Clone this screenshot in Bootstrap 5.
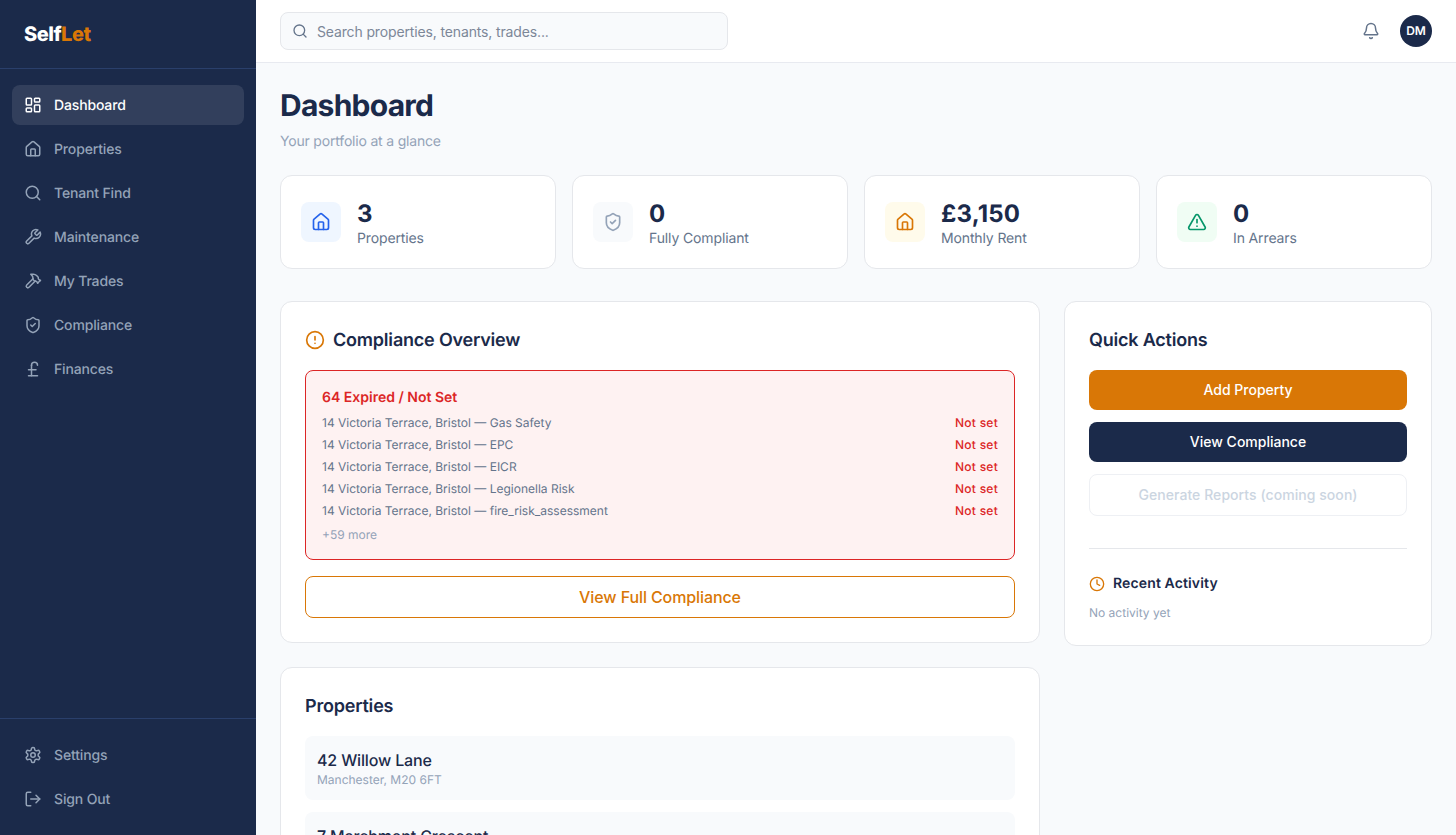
<!DOCTYPE html>
<html lang="en">
<head>
    <meta charset="UTF-8">
    <meta name="viewport" content="width=device-width, initial-scale=1.0">
    <title>SelfLet Dashboard</title>
    <link rel="stylesheet" href="https://cdn.jsdelivr.net/npm/bootstrap@5.3.0/dist/css/bootstrap.min.css">
    <style>
        html, body { height: 100%; overflow: hidden; }
        body { font-family: Inter, "Liberation Sans", sans-serif; background: #f8fafc; color: #1b2a4a; text-rendering: geometricPrecision; }
        svg.ic { fill: none; stroke: currentColor; stroke-width: 2; stroke-linecap: round; stroke-linejoin: round; flex-shrink: 0; }

        .app { height: 835px; }
        .sidebar { width: 256px; background: #1b2a4a; flex-shrink: 0; }
        .brand { height: 69px; padding: 0 24px; border-bottom: 1px solid #2a3f6b; font-size: 20px; font-weight: 800; letter-spacing: -0.5px; color: #fff; }
        .brand span { color: #d97706; }
        .side-nav { padding: 16px 12px; gap: 4px; }
        .side-foot { padding: 16px 12px; gap: 4px; border-top: 1px solid #2a3f6b; }
        .side-link { height: 40px; padding: 0 12px; gap: 12px; border-radius: 8px; font-size: 14px; font-weight: 500; letter-spacing: -0.15px; color: #94a3b8; text-decoration: none; }
        .side-link.active { background: rgba(255,255,255,0.1); color: #fff; }

        .topbar { height: 63px; padding: 0 24px; background: #fff; border-bottom: 1px solid #e8eaf0; }
        .search { width: 448px; height: 38px; padding: 0 12px 0 11px; gap: 9px; background: #f8fafc; border: 1px solid #e5e7eb; border-radius: 8px; color: #64748b; }
        .search input { border: 0; outline: 0; background: transparent; width: 100%; font-size: 14px; letter-spacing: -0.14px; padding: 0; color: #1b2a4a; }
        .search input::placeholder { color: #7c8798; opacity: 1; }
        .bell { color: #64748b; }
        .avatar { width: 32px; height: 32px; background: #1b2a4a; color: #fff; font-size: 12px; font-weight: 600; }

        .content { padding: 24px; }
        .page-title { font-size: 30px; font-weight: 700; line-height: 36px; letter-spacing: -0.75px; margin: 0 0 3px; padding-top: 1px; }
        .page-sub { font-size: 14px; line-height: 20px; letter-spacing: -0.19px; color: #94a3b8; margin: 8px 0 23px; }

        .panel { background: #fff; border: 1px solid #e5e7eb; border-radius: 12px; }
        .stats { display: grid; grid-template-columns: repeat(4, 1fr); gap: 16px; margin-bottom: 32px; }
        .stat { padding: 20px; height: 94px; gap: 16px; }
        .stat-icon { width: 40px; height: 40px; border-radius: 8px; }
        .stat-text { padding-top: 3px; }
        .stat-value { font-size: 24px; font-weight: 700; line-height: 32px; letter-spacing: 0.2px; margin-bottom: -1px; }
        .stat-label { font-size: 14px; line-height: 20px; letter-spacing: -0.13px; color: #64748b; }

        .columns { display: grid; grid-template-columns: 1fr 368px; gap: 24px; align-items: start; }
        .card-pad { padding: 24px; }
        .section-title { font-size: 18px; font-weight: 600; line-height: 28px; letter-spacing: -0.2px; margin: 0 0 -1px; padding-top: 1px; }

        .alert-box { background: #fef2f2; border: 1px solid #dc2626; border-radius: 8px; padding: 16px; margin-top: 16px; height: 190px; }
        .alert-head { font-size: 14px; font-weight: 600; line-height: 20px; color: #dc2626; margin-bottom: 4px; padding-top: 1px; }
        .alert-row { font-size: 12px; line-height: 16px; padding: 3px 0; color: #64748b; }
        .alert-row b { font-weight: 500; letter-spacing: 0.25px; color: #dc2626; }
        .alert-more { font-size: 12px; line-height: 16px; color: #94a3b8; margin-top: 5px; }

        .btn-full-outline { height: 42px; margin-top: 16px; border: 1px solid #d97706; border-radius: 8px; background: #fff; color: #d97706; font-size: 16px; font-weight: 500; letter-spacing: -0.1px; }
        .act { height: 40px; border-radius: 8px; font-size: 14px; font-weight: 500; border: 0; color: #fff; padding-top: 5px; padding-bottom: 7px; }
        .act-amber, .act-amber:hover { background: #d97706; color: #fff; }
        .act-navy, .act-navy:hover { background: #1b2a4a; color: #fff; }
        .btn.act-off:disabled { height: 42px; background: #fff; border: 1px solid #eef0f4; color: #cbd5e1; font-weight: 500; letter-spacing: 0.06px; opacity: 1; }

        .divider { height: 1px; background: #e5e7eb; margin: 32px 0 25px; }
        .recent-title { font-size: 14px; font-weight: 600; line-height: 20px; letter-spacing: 0.13px; }
        .recent-empty { font-size: 12px; line-height: 16px; color: #94a3b8; margin-top: 11px; }

        .prop-list { margin-top: 16px; }
        .prop-item { height: 64px; padding: 12px; background: #f8fafc; border-radius: 8px; }
        .prop-name { font-size: 16px; font-weight: 500; line-height: 24px; letter-spacing: -0.15px; }
        .prop-addr { font-size: 12px; line-height: 16px; color: #94a3b8; }
    </style>
</head>
<body>
    <div class="app d-flex">
        <aside class="sidebar d-flex flex-column">
            <div class="brand d-flex align-items-center">Self<span>Let</span></div>
            <nav class="side-nav d-flex flex-column flex-grow-1">
                <a href="#" class="side-link active d-flex align-items-center">
                    <svg class="ic" width="18" height="18" viewBox="0 0 24 24"><rect x="3" y="3" width="7" height="9" rx="1"/><rect x="14" y="3" width="7" height="5" rx="1"/><rect x="14" y="12" width="7" height="9" rx="1"/><rect x="3" y="16" width="7" height="5" rx="1"/></svg>
                    Dashboard
                </a>
                <a href="#" class="side-link d-flex align-items-center">
                    <svg class="ic" width="18" height="18" viewBox="0 0 24 24"><path d="M15 21v-8a1 1 0 0 0-1-1h-4a1 1 0 0 0-1 1v8"/><path d="M3 10a2 2 0 0 1 .709-1.528l7-5.999a2 2 0 0 1 2.582 0l7 5.999A2 2 0 0 1 21 10v9a2 2 0 0 1-2 2H5a2 2 0 0 1-2-2z"/></svg>
                    Properties
                </a>
                <a href="#" class="side-link d-flex align-items-center">
                    <svg class="ic" width="18" height="18" viewBox="0 0 24 24"><circle cx="11" cy="11" r="8"/><path d="m21 21-4.3-4.3"/></svg>
                    Tenant Find
                </a>
                <a href="#" class="side-link d-flex align-items-center">
                    <svg class="ic" width="18" height="18" viewBox="0 0 24 24"><path d="M14.7 6.3a1 1 0 0 0 0 1.4l1.6 1.6a1 1 0 0 0 1.4 0l3.77-3.77a6 6 0 0 1-7.94 7.94l-6.91 6.91a2.12 2.12 0 0 1-3-3l6.91-6.91a6 6 0 0 1 7.94-7.94l-3.76 3.76z"/></svg>
                    Maintenance
                </a>
                <a href="#" class="side-link d-flex align-items-center">
                    <svg class="ic" width="18" height="18" viewBox="0 0 24 24"><path d="m15 12-8.373 8.373a1 1 0 1 1-3-3L12 9"/><path d="m18 15 4-4"/><path d="m21.5 11.5-1.914-1.914A2 2 0 0 1 19 8.172V7l-2.26-2.26a6 6 0 0 0-4.202-1.756L9 2.96l.92.82A6.18 6.18 0 0 1 12 8.4V10l2 2h1.172a2 2 0 0 1 1.414.586L18.5 14.5"/></svg>
                    My Trades
                </a>
                <a href="#" class="side-link d-flex align-items-center">
                    <svg class="ic" width="18" height="18" viewBox="0 0 24 24"><path d="M20 13c0 5-3.5 7.5-7.66 8.95a1 1 0 0 1-.67-.01C7.5 20.5 4 18 4 13V6a1 1 0 0 1 1-1c2 0 4.5-1.2 6.24-2.72a1.17 1.17 0 0 1 1.52 0C14.51 3.81 17 5 19 5a1 1 0 0 1 1 1z"/><path d="m9 12 2 2 4-4"/></svg>
                    Compliance
                </a>
                <a href="#" class="side-link d-flex align-items-center">
                    <svg class="ic" width="18" height="18" viewBox="0 0 24 24"><path d="M18 7c0-5.333-8-5.333-8 0"/><path d="M10 7v14"/><path d="M6 21h12"/><path d="M6 13h10"/></svg>
                    Finances
                </a>
            </nav>
            <div class="side-foot d-flex flex-column">
                <a href="#" class="side-link d-flex align-items-center">
                    <svg class="ic" width="18" height="18" viewBox="0 0 24 24"><path d="M12.22 2h-.44a2 2 0 0 0-2 2v.18a2 2 0 0 1-1 1.73l-.43.25a2 2 0 0 1-2 0l-.15-.08a2 2 0 0 0-2.73.73l-.22.38a2 2 0 0 0 .73 2.73l.15.1a2 2 0 0 1 1 1.72v.51a2 2 0 0 1-1 1.74l-.15.09a2 2 0 0 0-.73 2.73l.22.38a2 2 0 0 0 2.73.73l.15-.08a2 2 0 0 1 2 0l.43.25a2 2 0 0 1 1 1.73V20a2 2 0 0 0 2 2h.44a2 2 0 0 0 2-2v-.18a2 2 0 0 1 1-1.73l.43-.25a2 2 0 0 1 2 0l.15.08a2 2 0 0 0 2.73-.73l.22-.39a2 2 0 0 0-.73-2.73l-.15-.08a2 2 0 0 1-1-1.74v-.5a2 2 0 0 1 1-1.74l.15-.09a2 2 0 0 0 .73-2.73l-.22-.38a2 2 0 0 0-2.73-.73l-.15.08a2 2 0 0 1-2 0l-.43-.25a2 2 0 0 1-1-1.73V4a2 2 0 0 0-2-2z"/><circle cx="12" cy="12" r="3"/></svg>
                    Settings
                </a>
                <a href="#" class="side-link d-flex align-items-center">
                    <svg class="ic" width="18" height="18" viewBox="0 0 24 24"><path d="M9 21H5a2 2 0 0 1-2-2V5a2 2 0 0 1 2-2h4"/><path d="m16 17 5-5-5-5"/><path d="M21 12H9"/></svg>
                    Sign Out
                </a>
            </div>
        </aside>

        <div class="flex-grow-1 d-flex flex-column overflow-hidden">
            <header class="topbar d-flex align-items-center justify-content-between flex-shrink-0">
                <label class="search d-flex align-items-center mb-0">
                    <svg class="ic" width="16" height="16" viewBox="0 0 24 24"><circle cx="11" cy="11" r="8"/><path d="m21 21-4.3-4.3"/></svg>
                    <input type="text" placeholder="Search properties, tenants, trades...">
                </label>
                <div class="d-flex align-items-center gap-3">
                    <svg class="ic bell me-1" width="18" height="18" viewBox="0 0 24 24"><path d="M10.268 21a2 2 0 0 0 3.464 0"/><path d="M3.262 15.326A1 1 0 0 0 4 17h16a1 1 0 0 0 .74-1.673C19.41 13.956 18 12.499 18 8A6 6 0 0 0 6 8c0 4.499-1.411 5.956-2.738 7.326"/></svg>
                    <div class="avatar rounded-circle d-flex align-items-center justify-content-center">DM</div>
                </div>
            </header>

            <main class="content flex-grow-1 overflow-hidden">
                <h1 class="page-title">Dashboard</h1>
                <p class="page-sub">Your portfolio at a glance</p>

                <div class="stats">
                    <div class="panel stat d-flex align-items-center">
                        <div class="stat-icon d-flex align-items-center justify-content-center" style="background:#eff6ff;color:#2563eb">
                            <svg class="ic" width="20" height="20" viewBox="0 0 24 24"><path d="M15 21v-8a1 1 0 0 0-1-1h-4a1 1 0 0 0-1 1v8"/><path d="M3 10a2 2 0 0 1 .709-1.528l7-5.999a2 2 0 0 1 2.582 0l7 5.999A2 2 0 0 1 21 10v9a2 2 0 0 1-2 2H5a2 2 0 0 1-2-2z"/></svg>
                        </div>
                        <div class="stat-text"><div class="stat-value">3</div><div class="stat-label">Properties</div></div>
                    </div>
                    <div class="panel stat d-flex align-items-center">
                        <div class="stat-icon d-flex align-items-center justify-content-center" style="background:#f8fafc;color:#94a3b8">
                            <svg class="ic" width="20" height="20" viewBox="0 0 24 24"><path d="M20 13c0 5-3.5 7.5-7.66 8.95a1 1 0 0 1-.67-.01C7.5 20.5 4 18 4 13V6a1 1 0 0 1 1-1c2 0 4.5-1.2 6.24-2.72a1.17 1.17 0 0 1 1.52 0C14.51 3.81 17 5 19 5a1 1 0 0 1 1 1z"/><path d="m9 12 2 2 4-4"/></svg>
                        </div>
                        <div class="stat-text"><div class="stat-value">0</div><div class="stat-label">Fully Compliant</div></div>
                    </div>
                    <div class="panel stat d-flex align-items-center">
                        <div class="stat-icon d-flex align-items-center justify-content-center" style="background:#fffbeb;color:#d97706">
                            <svg class="ic" width="20" height="20" viewBox="0 0 24 24"><path d="M15 21v-8a1 1 0 0 0-1-1h-4a1 1 0 0 0-1 1v8"/><path d="M3 10a2 2 0 0 1 .709-1.528l7-5.999a2 2 0 0 1 2.582 0l7 5.999A2 2 0 0 1 21 10v9a2 2 0 0 1-2 2H5a2 2 0 0 1-2-2z"/></svg>
                        </div>
                        <div class="stat-text"><div class="stat-value">£3,150</div><div class="stat-label">Monthly Rent</div></div>
                    </div>
                    <div class="panel stat d-flex align-items-center">
                        <div class="stat-icon d-flex align-items-center justify-content-center" style="background:#f0fdf4;color:#059669">
                            <svg class="ic" width="20" height="20" viewBox="0 0 24 24"><path d="m21.73 18-8-14a2 2 0 0 0-3.48 0l-8 14A2 2 0 0 0 4 21h16a2 2 0 0 0 1.73-3"/><path d="M12 9v4"/><path d="M12 17h.01"/></svg>
                        </div>
                        <div class="stat-text"><div class="stat-value">0</div><div class="stat-label">In Arrears</div></div>
                    </div>
                </div>

                <div class="columns">
                    <div class="d-flex flex-column gap-4">
                        <section class="panel card-pad">
                            <div class="d-flex align-items-center gap-2">
                                <svg class="ic" width="20" height="20" viewBox="0 0 24 24" style="color:#d97706"><circle cx="12" cy="12" r="10"/><path d="M12 8v4"/><path d="M12 16h.01"/></svg>
                                <h2 class="section-title">Compliance Overview</h2>
                            </div>
                            <div class="alert-box">
                                <div class="alert-head">64 Expired / Not Set</div>
                                <div class="alert-row d-flex justify-content-between"><span>14 Victoria Terrace, Bristol — Gas Safety</span><b>Not set</b></div>
                                <div class="alert-row d-flex justify-content-between"><span>14 Victoria Terrace, Bristol — EPC</span><b>Not set</b></div>
                                <div class="alert-row d-flex justify-content-between"><span>14 Victoria Terrace, Bristol — EICR</span><b>Not set</b></div>
                                <div class="alert-row d-flex justify-content-between"><span>14 Victoria Terrace, Bristol — Legionella Risk</span><b>Not set</b></div>
                                <div class="alert-row d-flex justify-content-between"><span>14 Victoria Terrace, Bristol — fire_risk_assessment</span><b>Not set</b></div>
                                <div class="alert-more">+59 more</div>
                            </div>
                            <button class="btn btn-full-outline w-100 d-flex align-items-center justify-content-center">View Full Compliance</button>
                        </section>

                        <section class="panel card-pad">
                            <h2 class="section-title">Properties</h2>
                            <div class="prop-list d-flex flex-column gap-2">
                                <div class="prop-item"><div class="prop-name">42 Willow Lane</div><div class="prop-addr">Manchester, M20 6FT</div></div>
                                <div class="prop-item mt-1"><div class="prop-name">7 Marchmont Crescent</div><div class="prop-addr">Edinburgh, EH9 1HE</div></div>
                            </div>
                        </section>
                    </div>

                    <section class="panel card-pad">
                        <h2 class="section-title">Quick Actions</h2>
                        <div class="d-flex flex-column mt-3" style="gap:12px">
                            <button class="btn act act-amber">Add Property</button>
                            <button class="btn act act-navy">View Compliance</button>
                            <button class="btn act act-off" disabled>Generate Reports (coming soon)</button>
                        </div>
                        <div class="divider"></div>
                        <div class="recent-title d-flex align-items-center gap-2">
                            <svg class="ic" width="16" height="16" viewBox="0 0 24 24" style="color:#d97706"><circle cx="12" cy="12" r="10"/><path d="M12 6v6l4 2"/></svg>
                            Recent Activity
                        </div>
                        <div class="recent-empty">No activity yet</div>
                    </section>
                </div>
            </main>
        </div>
    </div>
    <script src="https://cdn.jsdelivr.net/npm/bootstrap@5.3.0/dist/js/bootstrap.bundle.min.js"></script>
</body>
</html>
